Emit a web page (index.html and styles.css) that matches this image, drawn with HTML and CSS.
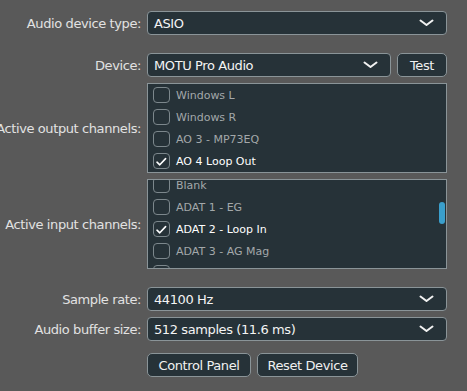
FILE: index.html
```html
<!DOCTYPE html>
<html>
<head>
<meta charset="utf-8">
<link rel="stylesheet" href="styles.css">
</head>
<body>
<div class="panel">
  <div class="row">
    <div class="label">Audio device type:</div>
    <div class="combo wide"><span>ASIO</span><svg class="chev" width="15" height="8" viewBox="0 0 15 8"><path d="M1.5 1.5 L7.5 6 L13.5 1.5" fill="none" stroke="#f2f2f2" stroke-width="2" stroke-linecap="round" stroke-linejoin="round"/></svg></div>
  </div>
  <div class="row gap-lg">
    <div class="label">Device:</div>
    <div class="combo device"><span>MOTU Pro Audio</span><svg class="chev" width="15" height="8" viewBox="0 0 15 8"><path d="M1.5 1.5 L7.5 6 L13.5 1.5" fill="none" stroke="#f2f2f2" stroke-width="2" stroke-linecap="round" stroke-linejoin="round"/></svg></div>
    <button class="btn test">Test</button>
  </div>
  <div class="row gap-sm">
    <div class="label">Active output channels:</div>
    <div class="listbox">
      <div class="items">
        <div class="item"><span class="cb"></span>Windows L</div>
        <div class="item"><span class="cb"></span>Windows R</div>
        <div class="item"><span class="cb"></span>AO 3 - MP73EQ</div>
        <div class="item on"><span class="cb"><svg width="17" height="16" viewBox="0 0 17 16"><path d="M4 9.2 L6.8 11.8 L12.6 5.6" fill="none" stroke="#ffffff" stroke-width="1.6" stroke-linecap="round" stroke-linejoin="round"/></svg></span>AO 4 Loop Out</div>
      </div>
    </div>
  </div>
  <div class="row gap-sm">
    <div class="label">Active input channels:</div>
    <div class="listbox">
      <div class="items scrolled">
        <div class="item"><span class="cb"></span>Blank</div>
        <div class="item"><span class="cb"></span>ADAT 1 - EG</div>
        <div class="item on"><span class="cb"><svg width="17" height="16" viewBox="0 0 17 16"><path d="M4 9.2 L6.8 11.8 L12.6 5.6" fill="none" stroke="#ffffff" stroke-width="1.6" stroke-linecap="round" stroke-linejoin="round"/></svg></span>ADAT 2 - Loop In</div>
        <div class="item"><span class="cb"></span>ADAT 3 - AG Mag</div>
        <div class="item"><span class="cb"></span></div>
      </div>
      <div class="thumb"></div>
    </div>
  </div>
  <div class="row gap-lg">
    <div class="label">Sample rate:</div>
    <div class="combo wide"><span>44100 Hz</span><svg class="chev" width="15" height="8" viewBox="0 0 15 8"><path d="M1.5 1.5 L7.5 6 L13.5 1.5" fill="none" stroke="#f2f2f2" stroke-width="2" stroke-linecap="round" stroke-linejoin="round"/></svg></div>
  </div>
  <div class="row gap-sm">
    <div class="label">Audio buffer size:</div>
    <div class="combo wide"><span>512 samples (11.6 ms)</span><svg class="chev" width="15" height="8" viewBox="0 0 15 8"><path d="M1.5 1.5 L7.5 6 L13.5 1.5" fill="none" stroke="#f2f2f2" stroke-width="2" stroke-linecap="round" stroke-linejoin="round"/></svg></div>
  </div>
  <div class="row gap-md">
    <div class="label"></div>
    <button class="btn cp">Control Panel</button>
    <button class="btn rd">Reset Device</button>
  </div>
</div>
</body>
</html>
```

FILE: styles.css
```css
html, body {
  margin: 0;
  padding: 0;
  background: #595959;
  width: 467px;
  height: 391px;
  overflow: hidden;
}

.panel {
  display: flex;
  flex-direction: column;
  padding-top: 11px;
  font-family: "DejaVu Sans", Verdana, sans-serif;
  font-size: 13px;
  letter-spacing: -0.4px;
  color: #e4e4e4;
}

.row {
  display: flex;
  align-items: center;
  column-gap: 6px;
}

.gap-sm { margin-top: 6px; }
.gap-md { margin-top: 12px; }
.gap-lg { margin-top: 18px; }

.label {
  width: 141px;
  flex-shrink: 0;
  display: flex;
  justify-content: flex-end;
  white-space: nowrap;
  color: #e2e2e2;
}

.combo {
  box-sizing: border-box;
  height: 24px;
  border: 1px solid #8a9498;
  border-radius: 4px;
  background: #263238;
  color: #f4f4f4;
  display: flex;
  align-items: center;
  justify-content: space-between;
  padding: 0 12px 0 6px;
  white-space: nowrap;
}

.wide { width: 300px; }
.device { width: 244px; }

.chev { display: block; flex-shrink: 0; }

.btn {
  box-sizing: border-box;
  height: 24px;
  border: 1px solid #8a9498;
  border-radius: 5px;
  background: #263238;
  color: #f0f0f0;
  font-family: inherit;
  font-size: 13px;
  letter-spacing: -0.4px;
  padding: 0;
  margin: 0;
}

.test { width: 50px; }
.cp { width: 104px; }
.rd { width: 101px; }

.listbox {
  box-sizing: border-box;
  width: 300px;
  height: 90px;
  border: 1px solid #8a9498;
  background: #263238;
  overflow: hidden;
  position: relative;
}

.items {
  display: flex;
  flex-direction: column;
}

.items.scrolled { margin-top: -6px; }

.item {
  height: 22px;
  flex-shrink: 0;
  display: flex;
  align-items: center;
  padding-left: 5px;
  font-size: 11px;
  letter-spacing: 0;
  color: #a3a8aa;
  white-space: nowrap;
}

.item.on { color: #ffffff; }

.cb {
  box-sizing: border-box;
  width: 17px;
  height: 16px;
  border: 1px solid #7c878c;
  border-radius: 4px;
  margin-right: 6px;
  position: relative;
  flex-shrink: 0;
}

.cb svg {
  position: absolute;
  left: -1px;
  top: -1px;
}

.thumb {
  position: absolute;
  right: 1px;
  top: 22px;
  width: 6px;
  height: 22px;
  border-radius: 3px;
  background: #3a9fcc;
}
```
